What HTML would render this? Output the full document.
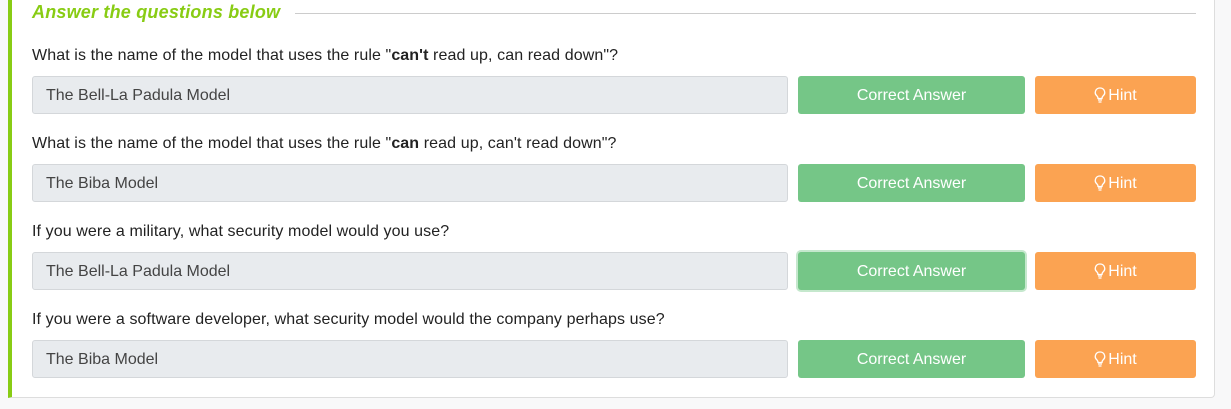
<!DOCTYPE html>
<html><head><style>
body{margin:0;width:1231px;height:409px;background:#f8f8f9;font-family:"Liberation Sans",sans-serif;position:relative;overflow:hidden}
.card{position:absolute;left:8px;top:-5px;width:1207px;height:403px;background:#fff;border:1px solid #ddd;border-left:4px solid #88cc14;border-radius:0 0 4px 0;box-sizing:border-box}
h3{position:absolute;left:32px;top:2px;margin:0;font-size:18px;font-style:italic;font-weight:bold;color:#88cc14;letter-spacing:0.2px}
.line{position:absolute;left:295px;top:13px;width:901px;height:1px;background:#ccc}
.q{position:absolute;left:32px;font-size:16px;color:#222;margin-top:1px;letter-spacing:0.1px}
.in{position:absolute;left:32px;width:756px;height:38px;background:#e8ebee;border:1px solid #d4d7da;border-radius:3px;box-sizing:border-box;padding-left:13px;line-height:38px;font-size:16px;color:#444}
.ca{position:absolute;left:798px;width:227px;height:38px;background:#75c687;border-radius:3px;color:#fff;font-size:16px;text-align:center;line-height:40px}
.h{position:absolute;left:1035px;width:161px;height:38px;background:#fba352;border-radius:3px;color:#fff;font-size:16px;text-align:center;line-height:40px}
.h svg{vertical-align:-3px;margin-right:2px}
</style></head><body>
<div class="card"></div>
<h3>Answer the questions below</h3><div class="line"></div>

<div class="q" style="top:46px">What is the name of the model that uses the rule "<b>can't</b> read up, can read down"?</div>
<div class="in" style="top:76px">The Bell-La Padula Model</div>
<div class="ca" style="top:76px">Correct Answer</div>
<div class="h" style="top:76px"><svg width="12" height="16" viewBox="0 0 12 16"><path d="M6 1a4.5 4.5 0 0 0-3 8c.8.8 1 1.5 1 2.5h4c0-1 .2-1.7 1-2.5A4.5 4.5 0 0 0 6 1zM4 13h4M4.5 15h3" fill="none" stroke="#fff" stroke-width="1.3"/></svg>Hint</div>

<div class="q" style="top:134px">What is the name of the model that uses the rule "<b>can</b> read up, can't read down"?</div>
<div class="in" style="top:164px">The Biba Model</div>
<div class="ca" style="top:164px">Correct Answer</div>
<div class="h" style="top:164px"><svg width="12" height="16" viewBox="0 0 12 16"><path d="M6 1a4.5 4.5 0 0 0-3 8c.8.8 1 1.5 1 2.5h4c0-1 .2-1.7 1-2.5A4.5 4.5 0 0 0 6 1zM4 13h4M4.5 15h3" fill="none" stroke="#fff" stroke-width="1.3"/></svg>Hint</div>

<div class="q" style="top:222px">If you were a military, what security model would you use?</div>
<div class="in" style="top:252px">The Bell-La Padula Model</div>
<div class="ca" style="top:252px;box-shadow:0 0 0 2px #c5e8cd">Correct Answer</div>
<div class="h" style="top:252px"><svg width="12" height="16" viewBox="0 0 12 16"><path d="M6 1a4.5 4.5 0 0 0-3 8c.8.8 1 1.5 1 2.5h4c0-1 .2-1.7 1-2.5A4.5 4.5 0 0 0 6 1zM4 13h4M4.5 15h3" fill="none" stroke="#fff" stroke-width="1.3"/></svg>Hint</div>

<div class="q" style="top:310px">If you were a software developer, what security model would the company perhaps use?</div>
<div class="in" style="top:340px">The Biba Model</div>
<div class="ca" style="top:340px">Correct Answer</div>
<div class="h" style="top:340px"><svg width="12" height="16" viewBox="0 0 12 16"><path d="M6 1a4.5 4.5 0 0 0-3 8c.8.8 1 1.5 1 2.5h4c0-1 .2-1.7 1-2.5A4.5 4.5 0 0 0 6 1zM4 13h4M4.5 15h3" fill="none" stroke="#fff" stroke-width="1.3"/></svg>Hint</div>
</body></html>
